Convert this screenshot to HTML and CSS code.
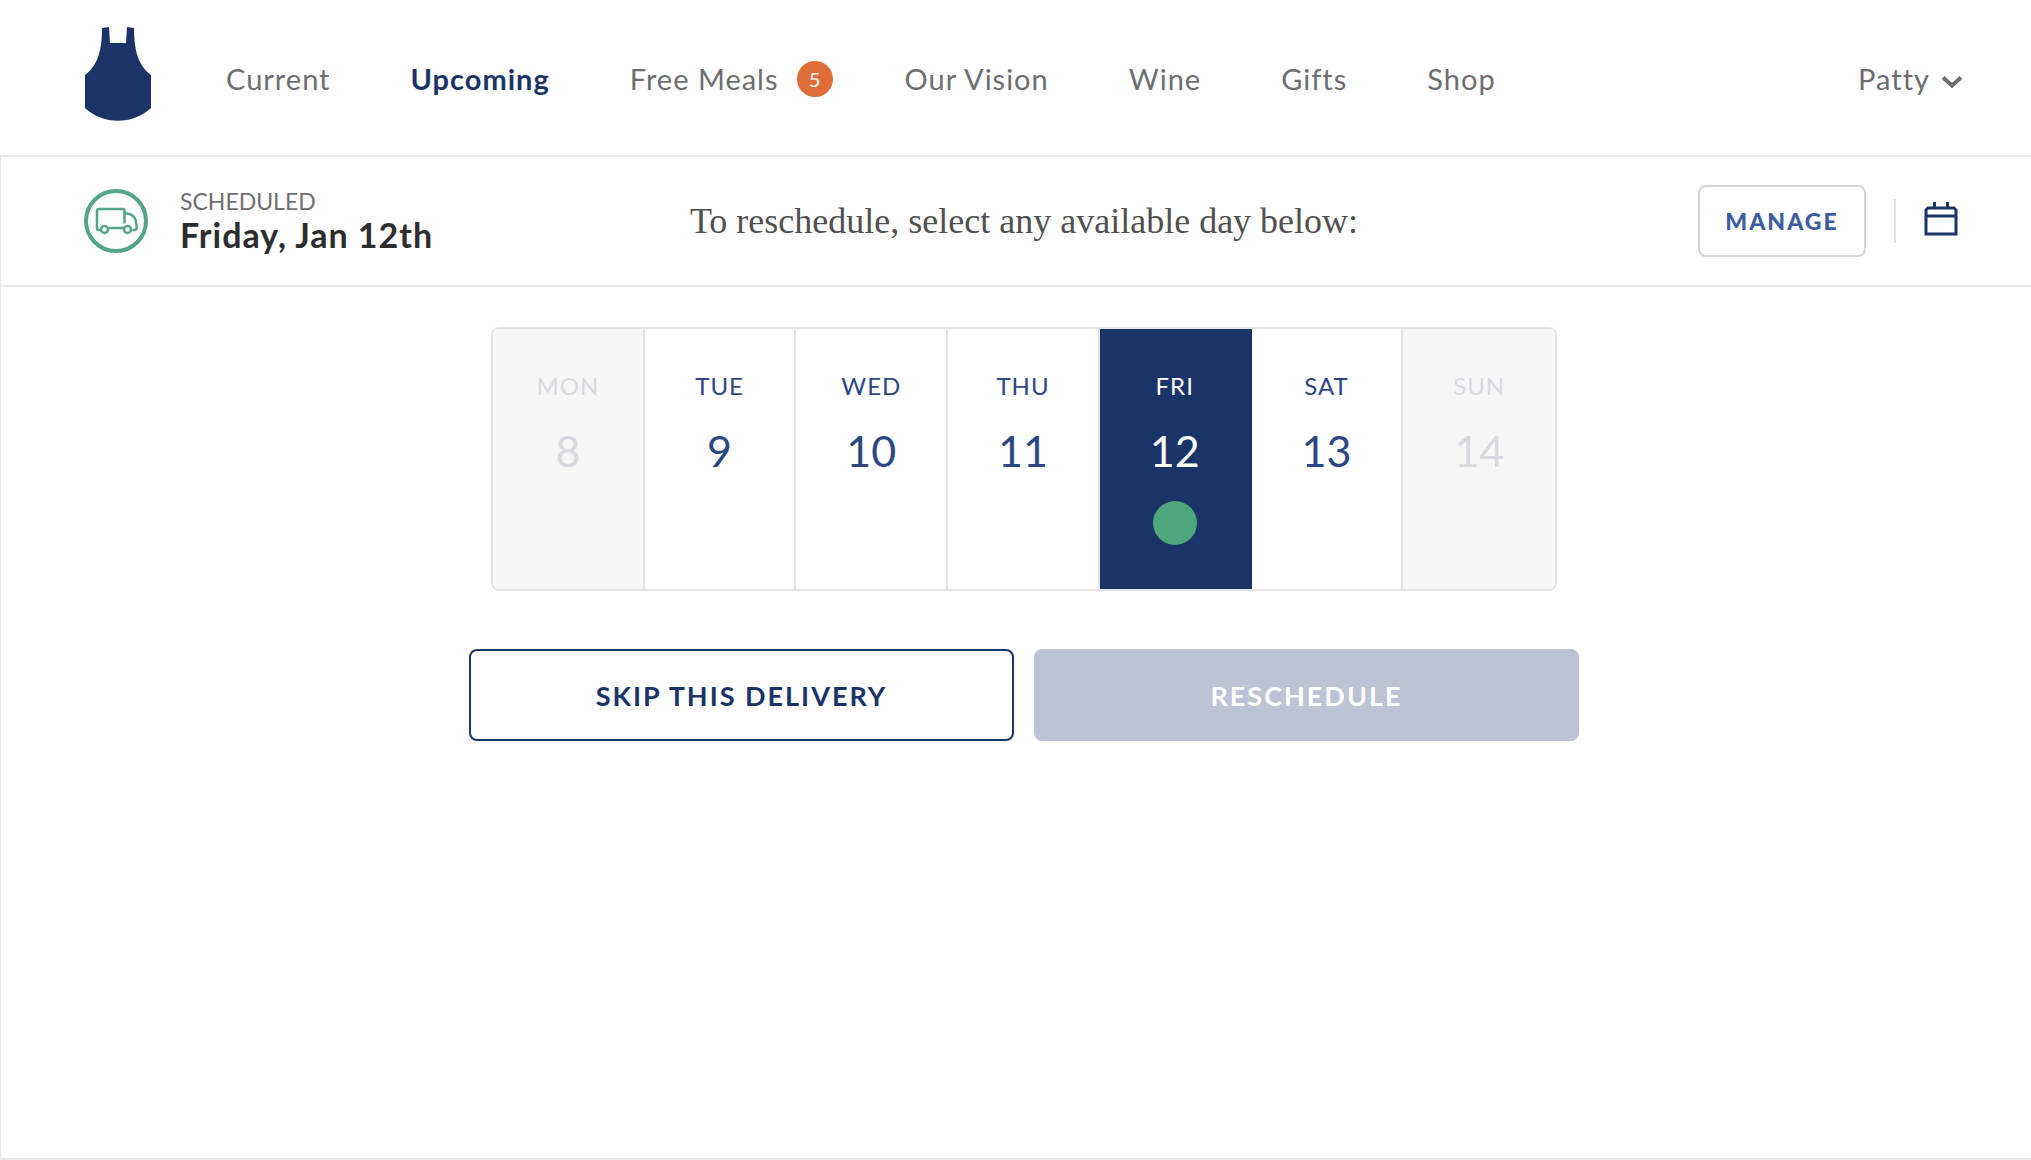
FILE: index.html
```html
<!DOCTYPE html>
<html lang="en">
<head>
<meta charset="utf-8">
<meta name="viewport" content="width=device-width, initial-scale=1">
<title>Upcoming delivery</title>
<link rel="stylesheet" href="styles.css">
</head>
<body>
<header class="header">
  <a class="logo" href="#" aria-label="Home">
    <svg width="66" height="94" viewBox="0 0 66 94" aria-hidden="true"><path fill="#1b3468" d="M17 1L24 0L25 16H41L42 0L49 1C49 25 54 39 66 48V81C48 98 18 98 0 81V48C12 39 17 25 17 1Z"/></svg>
  </a>
  <nav class="nav">
    <a href="#">Current</a>
    <a class="active" href="#" aria-current="page">Upcoming</a>
    <a class="with-badge" href="#">Free Meals <span class="badge">5</span></a>
    <a href="#">Our Vision</a>
    <a href="#">Wine</a>
    <a href="#">Gifts</a>
    <a href="#">Shop</a>
  </nav>
  <button class="account" type="button">Patty
    <svg width="22" height="14" viewBox="0 0 22 14" aria-hidden="true"><path d="M2 2.500L11 10.500L20 2.500" fill="none" stroke="#6d6e71" stroke-width="4"/></svg>
  </button>
</header>
<main class="main">
  <section class="delivery-bar">
    <div class="delivery">
      <svg width="64" height="64" viewBox="0 0 64 64" fill="none" stroke="#52a585" stroke-width="2.500" aria-hidden="true">
        <circle cx="32" cy="32" r="30" stroke-width="4"/>
        <path d="M17 41H14.500Q13 41 13 39V22Q13 20 15 20H38.500Q40.500 20 40.500 22V34.500M40.500 24.500H44Q52 26 52.500 36V39Q52.500 41 50.500 41H48.500M24.500 39H40"/>
        <circle cx="20.500" cy="40.500" r="3.500"/>
        <circle cx="43.500" cy="40.500" r="3.500"/>
      </svg>
      <div>
        <p class="status">SCHEDULED</p>
        <h1 class="date">Friday, Jan 12th</h1>
      </div>
    </div>
    <p class="prompt">To reschedule, select any available day below:</p>
    <div class="actions">
      <button class="manage" type="button">MANAGE</button>
      <button class="calendar" type="button" aria-label="Calendar">
        <svg width="34" height="36" viewBox="0 0 34 36" fill="none" stroke="#1b3468" stroke-width="3" aria-hidden="true"><path d="M4 7H30L32 9V33H2V9ZM2 15H32M10.500 1V8M23.500 1V8"/></svg>
      </button>
    </div>
  </section>
  <section class="picker">
    <div class="week">
      <button class="day" type="button" disabled><span class="name">MON</span><span class="number">8</span></button>
      <button class="day" type="button"><span class="name">TUE</span><span class="number">9</span></button>
      <button class="day" type="button"><span class="name">WED</span><span class="number">10</span></button>
      <button class="day" type="button"><span class="name">THU</span><span class="number">11</span></button>
      <button class="day selected" type="button" aria-pressed="true"><span class="name">FRI</span><span class="number">12</span><span class="dot"></span></button>
      <button class="day" type="button"><span class="name">SAT</span><span class="number">13</span></button>
      <button class="day" type="button" disabled><span class="name">SUN</span><span class="number">14</span></button>
    </div>
    <div class="buttons">
      <button class="skip" type="button">SKIP THIS DELIVERY</button>
      <button class="reschedule" type="button" disabled>RESCHEDULE</button>
    </div>
  </section>
</main>
</body>
</html>
```
FILE: styles.css
```css
* {
  box-sizing: border-box;
}

body {
  margin: 0;
  min-height: 100vh;
  display: flex;
  flex-direction: column;
  background: #fefefe;
  color: #6d6e71;
  font-family: Lato, "Liberation Sans", sans-serif;
}

p,
h1 {
  margin: 0;
}

svg {
  display: block;
}

button {
  margin: 0;
  padding: 0;
  border: 0;
  background: none;
  color: inherit;
  font: inherit;
}

.header {
  display: flex;
  align-items: flex-start;
  padding: 27px 68px 34px 85px;
}

.nav {
  display: flex;
  align-items: center;
  gap: 80px;
  margin-left: 75px;
  padding-top: 34px;
  font-size: 29px;
  line-height: 36px;
  letter-spacing: 1px;
}

.nav a {
  color: inherit;
  text-decoration: none;
  white-space: nowrap;
}

.nav .active {
  color: #1b3468;
  font-weight: 700;
}

.nav .with-badge {
  display: flex;
  gap: 18px;
  margin-right: -8px;
}

.badge {
  width: 36px;
  height: 36px;
  border-radius: 50%;
  background: #e06c37;
  color: #fff;
  font-size: 20px;
  letter-spacing: 0;
  text-align: center;
}

.account {
  display: flex;
  align-items: center;
  gap: 11px;
  margin-left: auto;
  padding-top: 34px;
  font-size: 29px;
  line-height: 36px;
  letter-spacing: 1px;
}

.account svg {
  margin-top: 6px;
}

.main {
  flex: 1;
  border: solid #e8e8e8;
  border-width: 2px 0 2px 1px;
}

.delivery-bar {
  display: grid;
  grid-template-columns: 1fr auto 1fr;
  align-items: center;
  padding: 28px 73px 28px 83px;
  border-bottom: 2px solid #e6e6e6;
}

.delivery {
  display: flex;
  align-items: center;
  gap: 32px;
}

.status {
  font-size: 23px;
  line-height: 28px;
}

.date {
  color: #2d2d2d;
  font-size: 34px;
  line-height: 40px;
  font-weight: 700;
  letter-spacing: 1px;
}

.prompt {
  padding-left: 6px;
  color: #505050;
  font-family: "Liberation Serif", serif;
  font-size: 36px;
  line-height: 40px;
}

.actions {
  display: flex;
  align-items: center;
  justify-content: flex-end;
  gap: 28px;
}

.manage {
  width: 168px;
  height: 72px;
  border: 2px solid #d6d6d8;
  border-radius: 8px;
  color: #3d5ca0;
  font-size: 23px;
  font-weight: 900;
  letter-spacing: 2px;
}

.calendar {
  padding: 2px 0 6px 28px;
  border-left: 2px solid #e3e3e3;
}

.picker {
  display: flex;
  flex-direction: column;
  align-items: center;
  gap: 58px;
  padding: 40px 34px 40px 50px;
}

.week {
  display: grid;
  grid-template-columns: repeat(7, 1fr);
  width: 100%;
  max-width: 1066px;
  overflow: hidden;
  border: 2px solid #e4e4e4;
  border-radius: 8px;
}

.day {
  display: flex;
  flex-direction: column;
  align-items: center;
  min-height: 260px;
  padding-top: 39px;
  border-right: 2px solid #e4e4e4;
  color: #2c4883;
}

.day:last-child {
  border-right: 0;
}

.day:disabled {
  background: #f7f7f8;
  color: #d9d9e0;
}

.day.selected {
  border-color: #1b3468;
  background: #1b3468;
  color: #fff;
}

.name {
  font-size: 24px;
  line-height: 36px;
  letter-spacing: 1px;
}

.number {
  margin-top: 19px;
  font-size: 43px;
  line-height: 56px;
}

.dot {
  width: 44px;
  height: 44px;
  margin-top: 22px;
  border-radius: 50%;
  background: #4ea67c;
}

.buttons {
  display: grid;
  grid-template-columns: 1fr 1fr;
  gap: 20px;
  width: 100%;
  max-width: 1110px;
}

.buttons button {
  height: 92px;
  border: 2px solid #1b3468;
  border-radius: 8px;
  color: #1b3468;
  font-size: 27px;
  font-weight: 700;
  letter-spacing: 2px;
}

.buttons .reschedule {
  border-color: #bcc3d4;
  background: #bcc3d4;
  color: #fff;
}
```
